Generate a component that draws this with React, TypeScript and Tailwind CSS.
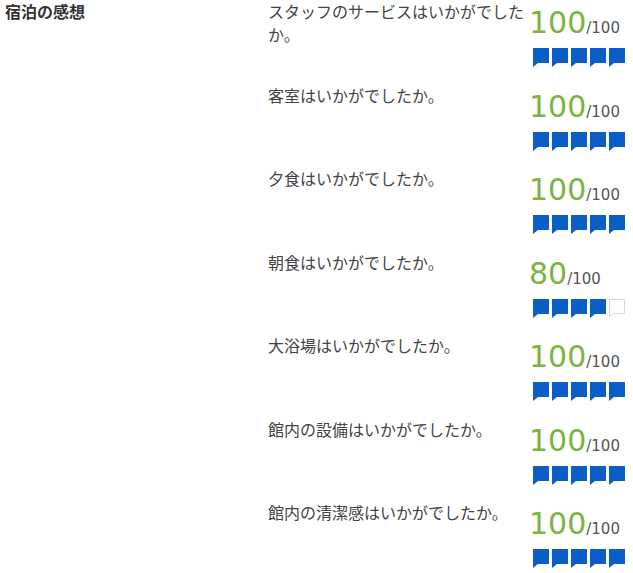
import React from "react";

const rows: { q: string; score: number }[] = [
  { q: "スタッフのサービスはいかがでしたか。", score: 100 },
  { q: "客室はいかがでしたか。", score: 100 },
  { q: "夕食はいかがでしたか。", score: 100 },
  { q: "朝食はいかがでしたか。", score: 80 },
  { q: "大浴場はいかがでしたか。", score: 100 },
  { q: "館内の設備はいかがでしたか。", score: 100 },
  { q: "館内の清潔感はいかがでしたか。", score: 100 },
];

function Bubble({ filled }: { filled: boolean }) {
  return (
    <svg width="16" height="19" viewBox="0 0 16 19" className="block">
      {filled ? (
        <path d="M0 0H16V15H5L0 19Z" fill="#0a5ec6" />
      ) : (
        <path d="M0.5 0.5H15.5V14.5H4.8L0.5 18Z" fill="#fff" stroke="#d4d4d4" strokeWidth="1" />
      )}
    </svg>
  );
}

export default function App() {
  return (
    <div
      className="flex bg-white text-[#333]"
      style={{ fontFamily: '"Noto Sans CJK JP", "Noto Sans", sans-serif' }}
    >
      <div className="w-[268px] shrink-0 pl-[5px] text-[16px] leading-[23px] font-bold text-[#333]">
        宿泊の感想
      </div>
      <div className="flex flex-col">
        {rows.map((r, i) => {
          const n = Math.round(r.score / 20);
          return (
            <div key={i} className="flex h-[83.5px]">
              <div className="w-[261px] shrink-0 text-[16px] leading-[23px] text-[#444]">{r.q}</div>
              <div className="flex flex-col">
                <div
                  className="mt-[6px] leading-[34px] whitespace-nowrap"
                  style={{ fontFamily: '"DejaVu Sans", sans-serif' }}
                >
                  <span className="text-[30px] text-[#7cb342]">{r.score}</span>
                  <span className="text-[15px] text-[#555]">/100</span>
                </div>
                <div className="mt-[3px] ml-[4px] flex gap-[3px]">
                  {[0, 1, 2, 3, 4].map((k) => (
                    <Bubble key={k} filled={k < n} />
                  ))}
                </div>
              </div>
            </div>
          );
        })}
      </div>
    </div>
  );
}
